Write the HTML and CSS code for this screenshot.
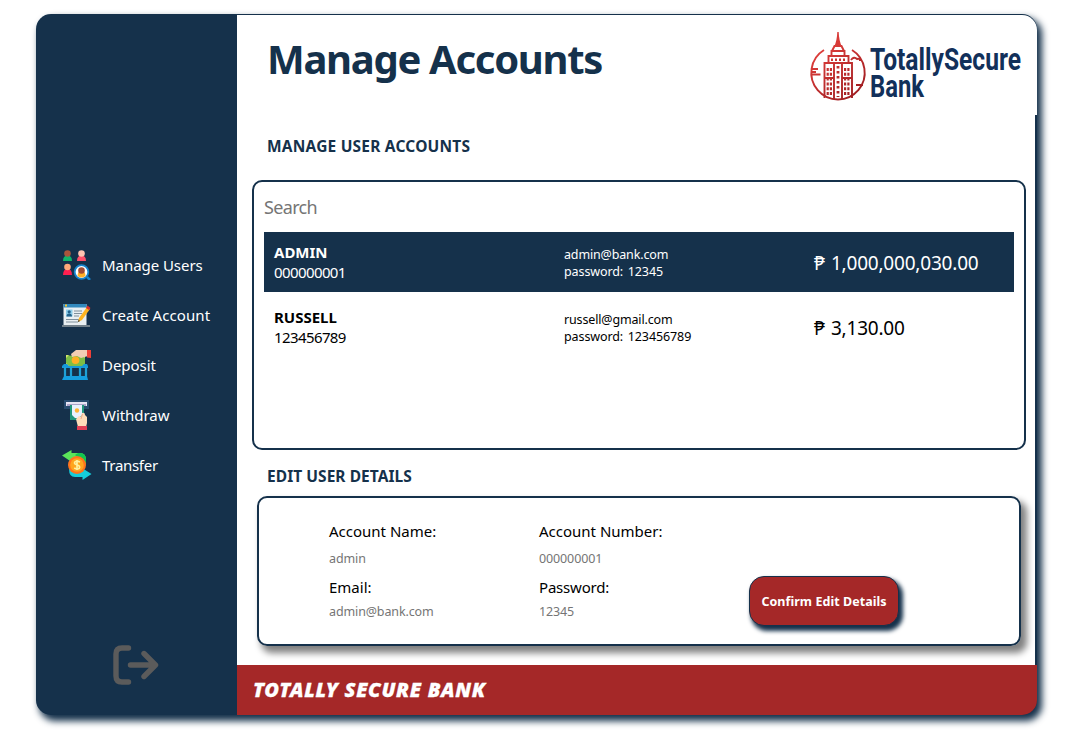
FILE: index.html
```html
<!DOCTYPE html>
<html lang="en">
<head>
<meta charset="utf-8">
<title>Manage Accounts</title>
<link rel="stylesheet" href="styles.css">
</head>
<body>
<div class="app">
  <aside class="sidebar">
    <nav class="nav">
      <a class="nav-item"><svg class="nav-icon" viewBox="0 0 30 30">
        <path d="M1 11q0-5.500 4.500-5.500T10 11z" fill="#10b36b"/><circle cx="5.500" cy="3.500" r="3.300" fill="#a8543c"/>
        <path d="M15 11q0-5.500 4.500-5.500T24 11z" fill="#ff4f69"/><circle cx="19.500" cy="3.500" r="3.300" fill="#ffc3b0"/>
        <path d="M1 25q0-6 4.500-6t4.500 6z" fill="#ff1f50"/><circle cx="5.500" cy="17" r="3.300" fill="#ffa879"/>
        <path d="m25 27 3 3" stroke="#1684ce" stroke-width="2.500"/><circle cx="19.500" cy="22" r="6.800" fill="#fff" stroke="#1684ce" stroke-width="1.800"/>
        <path d="M15.500 26q0-5 4-5t4 5q-4 3-8 0z" fill="#ffb027"/><circle cx="19.500" cy="20.500" r="3.300" fill="#a34b32"/>
      </svg><span class="nav-label">Manage Users</span></a>
      <a class="nav-item"><svg class="nav-icon" viewBox="0 0 30 30">
        <path d="M1.500 4h23v21h-23z" fill="#e9eff2"/><path d="M1.500 4h23v3.500h-23z" fill="#3289bd"/><path d="M3 4.500h2v2H3z" fill="#ffc62c"/>
        <path d="M4 9.500h6.500v7H4z" fill="#8dcde9"/><circle cx="7.200" cy="11.800" r="1.600" fill="#23628c"/><path d="M4.500 16.500q0-3 2.700-3t2.800 3z" fill="#23628c"/>
        <path d="M12 11h8M12 13.500h8M12 16h5M4 19.500h13M4 22h12" stroke="#81919c"/>
        <path d="M0 26h28" stroke="#7d8992" stroke-width="1.800"/>
        <path d="m16 22 1-4 8-11 3 2-8 11z" fill="#ffb41f"/><path d="m24 8 1.500-2.500L28.500 8 27 10z" fill="#d9302d"/><path d="m16 22 .5-2 1.500 1z" fill="#222"/>
      </svg><span class="nav-label create">Create Account</span></a>
      <a class="nav-item"><svg class="nav-icon" viewBox="0 0 30 30">
        <path d="m4 5 7 1 12-1v11H4z" fill="#7dbe45"/><path d="M4 5h3L4 8zm19 0h-3l3 3zM4 16h3l-3-3z" fill="#d4e66d"/>
        <path d="m9 4 5-4h12v6l-7 2-4-2-5 1z" fill="#f3cdb4"/><path d="M25-.5h4V8l-4-.5z" fill="#ef4038"/><circle cx="13.500" cy="10.300" r="3.800" fill="#ffaf24"/>
        <path d="m0 16 2-2h3l2 2h13l2-2h3l1 2v2H0z" fill="#1599da"/><path d="M3 17v9m6-9v9m9-9v9m6-9v9" stroke="#25b8eb" stroke-width="2.200"/><path d="M3 17v9m6-9v9m9-9v9m6-9v9" stroke="#1476b0" stroke-width=".7"/><path d="M2 26h23l1 4H0z" fill="#159fe0"/>
      </svg><span class="nav-label">Deposit</span></a>
      <a class="nav-item"><svg class="nav-icon" viewBox="0 0 30 30">
        <path d="M2 0h25v9H2z" fill="#284c70"/><path d="M4 2h21v4H4z" fill="#e7e4f4"/><path d="M5 4h19v2H5z" fill="#aaa4ca"/>
        <path d="M8 5h14v15H8z" fill="#20977d"/><path d="M10 5h10v10l-3 3h-4l-3-3z" fill="#e8f2ff"/><circle cx="15" cy="10.500" r="2.200" fill="#ffb536"/>
        <path d="M14 19l3-3 2 1 1-4q3-1 3 2l2 2v6l-1 4h-8z" fill="#ffdcb9"/><path d="m20.500 14-1.500 5" stroke="#efad8c" fill="none"/><path d="M15 26h10v4H15z" fill="#e23e55"/>
      </svg><span class="nav-label">Withdraw</span></a>
      <a class="nav-item"><svg class="nav-icon" viewBox="0 0 30 30">
        <path d="M0 5.500 9.500 0v3H18q6 0 6 7v4H17V9H9.500v3z" fill="#5be35a"/><path d="M16 3h2q6 0 6 7v4L13 5z" fill="#12c550"/>
        <path d="m29.500 24-9 6v-3H13q-6 0-6-8l13 2v-3z" fill="#15cdda"/><circle cx="15" cy="15" r="9" fill="#ff741d"/><circle cx="15" cy="15" r="6.800" fill="#ffa51e"/>
        <path d="M18 12q-5-2-5.500 1c0 2 5 1.500 5.200 4 0 2.500-3 2.500-5.500 1M15 10v10" stroke="#fff0a0" stroke-width="1.700" fill="none"/>
      </svg><span class="nav-label transfer">Transfer</span></a>
    </nav>
    <svg class="logout" viewBox="0 0 46 40"><path d="M15.500 3H9Q3 3 3 9v22q0 6 6 6h6.500M17.500 20H42M31 8.500 42.500 20 31 31.500" fill="none" stroke="#5b5b5b" stroke-width="5.400" stroke-linecap="round" stroke-linejoin="round"/></svg>
  </aside>
  <div class="page">
    <header class="header">
      <h1 class="title">Manage Accounts</h1>
      <svg class="logo" viewBox="0 0 214 72">
        <defs><linearGradient id="red" gradientUnits="userSpaceOnUse" x1="5" y1="10" x2="50" y2="65"><stop offset="0" stop-color="#e8443f"/><stop offset="1" stop-color="#9c1b20"/></linearGradient></defs>
        <g fill="none" stroke="url(#red)" stroke-width="1.900">
          <path d="M15 18A26.700 26.700 0 1 0 43 18M2 37h7M2 40h5M3 42.500h8.500M42 28q3-4 6-1 3-1 3 2M47 53h7"/>
          <path d="M15.500 66V31h4v-7h3v-5h13v5h4v7h3.500v35M19 31h20M21 24h16M25 67V31m8 0v36M15 46h10m8 0h10M23 19l2.500-5h7l2.500 5"/>
          <path d="M29 34v31" stroke-width="2.800" stroke-dasharray="2.500 2.500"/>
          <path d="M18.700 36v28m3.200-28v28m14.200-28v28m3.300-28v28" stroke-width="2.200" stroke-dasharray="3 1.800"/>
          <path d="M22 27.700h15" stroke-width="2.500" stroke-dasharray="2 2"/>
        </g>
        <path d="M25 15q3-6 3.300-15h1.400q.3 9 3.300 15z" fill="#d83b38"/>
        <g class="logo-text"><text x="61" y="37.500" textLength="151" lengthAdjust="spacingAndGlyphs">TotallySecure</text><text x="61" y="64.500" textLength="54" lengthAdjust="spacingAndGlyphs">Bank</text></g>
      </svg>
    </header>
    <main class="content">
      <h2 class="section-title">MANAGE USER ACCOUNTS</h2>
      <section class="accounts">
        <div class="search">Search</div>
        <div class="account selected">
          <div class="who"><b>ADMIN</b><span>000000001</span></div>
          <div class="login"><span>admin@bank.com</span><span class="pw">password: 12345</span></div>
          <div class="balance">₱ 1,000,000,030.00</div>
        </div>
        <div class="account">
          <div class="who"><b>RUSSELL</b><span>123456789</span></div>
          <div class="login"><span>russell@gmail.com</span><span class="pw">password: 123456789</span></div>
          <div class="balance">₱ 3,130.00</div>
        </div>
      </section>
      <h2 class="section-title edit">EDIT USER DETAILS</h2>
      <section class="details">
        <div class="fields">
          <div class="label">Account Name:</div><div class="label">Account Number:</div>
          <div class="value">admin</div><div class="value">000000001</div>
          <div class="label">Email:</div><div class="label password">Password:</div>
          <div class="value">admin@bank.com</div><div class="value">12345</div>
        </div>
        <button class="confirm">Confirm Edit Details</button>
      </section>
    </main>
    <footer class="footer">TOTALLY SECURE BANK</footer>
  </div>
</div>
</body>
</html>
```
FILE: styles.css
```css
* { box-sizing: border-box; }
body { margin: 0; height: 743px; padding: 14px 0 0 36px; background: #fff; font-family: "Noto Sans", sans-serif; font-size: 15px; color: #000; white-space: nowrap; }
.app { display: flex; width: 1001px; height: 701px; background: #15314b; border-radius: 15px; box-shadow: 4px 5px 7px 1px #15314b; }
.sidebar { width: 201px; display: flex; flex-direction: column; padding: 226px 0 0 26px; color: #fff; }
.nav { display: flex; flex-direction: column; height: 250px; }
.nav-item { display: flex; align-items: center; height: 50px; gap: 10px; }
.nav-label { letter-spacing: -.05px; }
.nav-label.create { letter-spacing: .08px; }
.nav-label.transfer { letter-spacing: -.3px; }
.nav-icon { width: 30px; height: 30px; overflow: hidden; }
.logout { width: 46px; height: 40px; margin: 155px 0 0 51px; }
.page { width: 800px; padding-top: 1px; }
.header { display: flex; justify-content: space-between; height: 100px; background: #fff; border-top-right-radius: 15px; padding: 17px 14px 0 30px; }
.title { margin: 0; font-size: 40px; line-height: 53px; letter-spacing: -1.3px; color: #15314b; }
.logo { width: 214px; height: 72px; overflow: visible; }
.logo-text { font: 700 31.500px Roboto, sans-serif; fill: #12305a; }
.content { width: 798px; height: 550px; background: #fff; padding: 20px 9px 0 15px; }
.section-title { margin: 0 0 0 15px; padding-top: 1px; font-size: 15.500px; line-height: 21px; letter-spacing: .2px; color: #15314b; }
.section-title.edit { letter-spacing: .05px; }
.accounts { width: 774px; height: 270px; margin: 23px 0 15px; padding: 8px 10px; border: 2px solid #15314b; border-radius: 10px; }
.search { height: 42px; padding-top: 4px; font-size: 18px; line-height: 26px; letter-spacing: -.65px; color: #757575; }
.account { display: grid; grid-template-columns: 290px 250px 1fr; height: 60px; margin-bottom: 5px; padding-left: 10px; }
.selected { background: #15314b; color: #fff; }
.who, .login { display: flex; flex-direction: column; }
.who { padding-top: 10px; line-height: 20px; letter-spacing: -.6px; }
.who b { letter-spacing: 0; }
.login { padding-top: 14px; line-height: 17px; font-size: 12.500px; letter-spacing: -.15px; }
.login .pw { letter-spacing: -.1px; word-spacing: 1.500px; }
.balance { font-size: 19px; line-height: 62px; letter-spacing: -.2px; word-spacing: 1.500px; }
.details { display: flex; width: 764px; height: 150px; margin: 9px 0 0 5px; border: 2px solid #15314b; border-radius: 10px; box-shadow: 5px 6px 7px 1px #808080; padding: 19px 0 0 70px; }
.fields { display: grid; grid-template-columns: 210px 210px; grid-template-rows: 28px 28px 25px 24px; width: 420px; line-height: 28px; }
.label.password { letter-spacing: -.2px; }
.value { color: #757575; font-size: 12.500px; letter-spacing: -.12px; }
.confirm { width: 150px; height: 50px; margin-top: 59px; padding: 0; border: 1px solid #15314b; border-radius: 15px; background: #a52828; color: #fff; font: bold 12.500px "Noto Sans", sans-serif; letter-spacing: .05px; box-shadow: 3px 4px 4px 1px #15314b; }
.footer { height: 50px; background: #a52828; border-bottom-right-radius: 15px; padding-left: 16px; color: #fff; font: italic 900 20px/50px "Noto Sans", sans-serif; letter-spacing: .7px; -webkit-text-stroke: .3px #fff; }
```
